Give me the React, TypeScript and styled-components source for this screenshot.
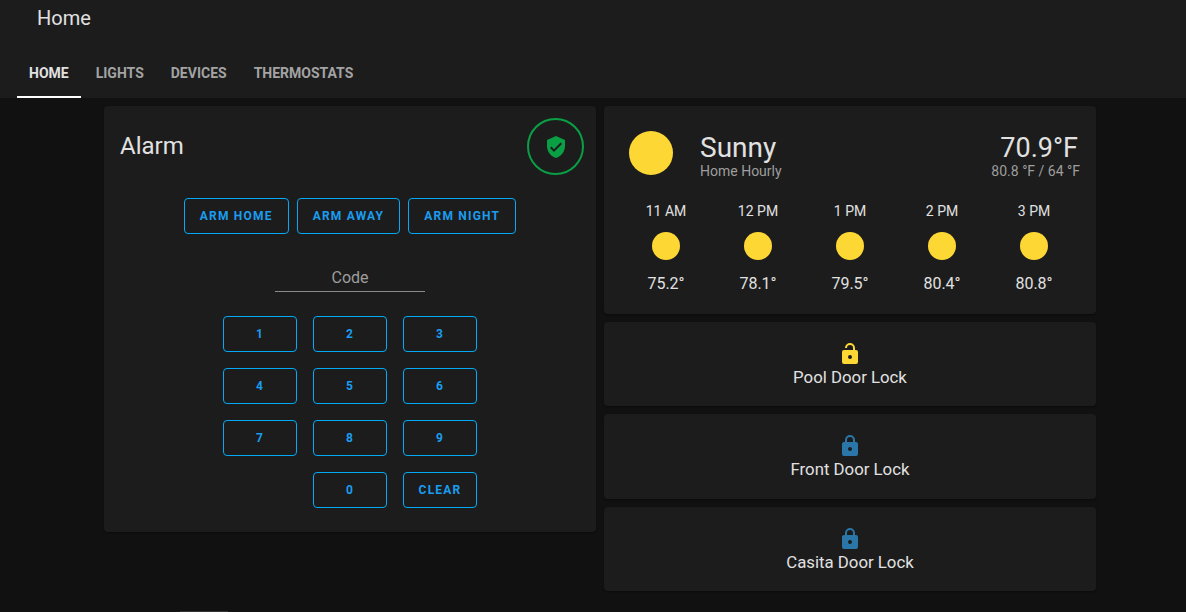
import React from 'react';
import styled, { createGlobalStyle } from 'styled-components';

const SHIELD =
  'M10,17L6,13L7.41,11.58L10,14.17L16.59,7.58L18,9M12,1L3,5V11C3,16.55 6.84,21.74 12,23C17.16,21.74 21,16.55 21,11V5L12,1Z';
const LOCK =
  'M12,17A2,2 0 0,0 14,15C14,13.89 13.1,13 12,13A2,2 0 0,0 10,15A2,2 0 0,0 12,17M18,8A2,2 0 0,1 20,10V20A2,2 0 0,1 18,22H6A2,2 0 0,1 4,20V10C4,8.89 4.9,8 6,8H7V6A5,5 0 0,1 12,1A5,5 0 0,1 17,6V8H18M12,3A3,3 0 0,0 9,6V8H15V6A3,3 0 0,0 12,3Z';
const LOCK_OPEN =
  'M18,8H17V6A5,5 0 0,0 12,1A5,5 0 0,0 7,6H9A3,3 0 0,1 12,3A3,3 0 0,1 15,6V8H6A2,2 0 0,0 4,10V20A2,2 0 0,0 6,22H18A2,2 0 0,0 20,20V10A2,2 0 0,0 18,8M12,17A2,2 0 0,1 10,15A2,2 0 0,1 12,13A2,2 0 0,1 14,15A2,2 0 0,1 12,17Z';

const tabs = ['Home', 'Lights', 'Devices', 'Thermostats'];
const armModes = ['Arm Home', 'Arm Away', 'Arm Night'];
const keys = ['1', '2', '3', '4', '5', '6', '7', '8', '9', '', '0', 'Clear'];
const hours = [
  { time: '11 AM', temp: '75.2°' },
  { time: '12 PM', temp: '78.1°' },
  { time: '1 PM', temp: '79.5°' },
  { time: '2 PM', temp: '80.4°' },
  { time: '3 PM', temp: '80.8°' },
];
const locks = [
  { name: 'Pool Door Lock', open: true },
  { name: 'Front Door Lock', open: false },
  { name: 'Casita Door Lock', open: false },
];

export default function App() {
  return (
    <>
      <GlobalStyle />
      <Header>
        <Title>Home</Title>
        <Tabs>
          {tabs.map((tab, i) => (
            <Tab key={tab} $active={i === 0}>
              {tab}
            </Tab>
          ))}
        </Tabs>
      </Header>
      <Content>
        <Column>
          <AlarmCard>
            <AlarmTop>
              <CardTitle>Alarm</CardTitle>
              <ShieldRing>
                <svg width="24" height="24" viewBox="0 0 24 24" fill="currentColor">
                  <path d={SHIELD} />
                </svg>
              </ShieldRing>
            </AlarmTop>
            <ArmRow>
              {armModes.map((mode) => (
                <ArmButton key={mode}>{mode}</ArmButton>
              ))}
            </ArmRow>
            <CodeField>Code</CodeField>
            <Keypad>
              {keys.map((key, i) =>
                key ? <KeyButton key={key}>{key}</KeyButton> : <span key={i} />,
              )}
            </Keypad>
          </AlarmCard>
          <NextCardEdge />
        </Column>
        <Column>
          <WeatherCard>
            <WeatherTop>
              <BigSun />
              <Condition>
                <ConditionName>Sunny</ConditionName>
                <Muted>Home Hourly</Muted>
              </Condition>
              <Temps>
                <BigTemp>70.9°F</BigTemp>
                <Muted>80.8 °F / 64 °F</Muted>
              </Temps>
            </WeatherTop>
            <Forecast>
              {hours.map((hour) => (
                <Hour key={hour.time}>
                  <HourTime>{hour.time}</HourTime>
                  <SmallSun />
                  <HourTemp>{hour.temp}</HourTemp>
                </Hour>
              ))}
            </Forecast>
          </WeatherCard>
          {locks.map((lock) => (
            <LockCard key={lock.name}>
              <LockIcon $open={lock.open}>
                <svg width="24" height="24" viewBox="0 0 24 24" fill="currentColor">
                  <path d={lock.open ? LOCK_OPEN : LOCK} />
                </svg>
              </LockIcon>
              <LockName>{lock.name}</LockName>
            </LockCard>
          ))}
        </Column>
      </Content>
    </>
  );
}

const GlobalStyle = createGlobalStyle`
  html, body {
    margin: 0;
    height: 612px;
    overflow: hidden;
    background: #111111;
    color: #e1e1e1;
    font-family: Roboto, "Liberation Sans", sans-serif;
  }
  * {
    box-sizing: border-box;
  }
`;

const Header = styled.header`
  height: 98px;
  background: #1c1c1c;
  padding-left: 17px;
`;

const Title = styled.div`
  height: 48px;
  padding: 6px 0 0 20px;
  font-size: 20px;
  line-height: 24px;
`;

const Tabs = styled.nav`
  display: flex;
  height: 50px;
`;

const Tab = styled.div<{ $active: boolean }>`
  display: flex;
  align-items: center;
  padding: 2px 12px 0;
  margin-right: 3px;
  font-size: 14px;
  font-weight: 700;
  text-transform: uppercase;
  color: ${(p) => (p.$active ? '#e1e1e1' : '#a3a3a3')};
  border-bottom: 2px solid ${(p) => (p.$active ? '#ffffff' : 'transparent')};
`;

const Content = styled.main`
  display: grid;
  grid-template-columns: 492px 492px;
  gap: 8px;
  justify-content: center;
  padding: 8px 0 0 14px;
`;

const Column = styled.div`
  display: flex;
  flex-direction: column;
  gap: 8px;
  align-items: stretch;
`;

const Card = styled.section`
  background: #1c1c1c;
  border-radius: 4px;
  box-shadow: 0 1px 2px rgba(0, 0, 0, 0.4);
`;

const AlarmCard = styled(Card)`
  height: 426px;
  padding: 12px 12px 0;
`;

const AlarmTop = styled.div`
  display: flex;
  justify-content: space-between;
  align-items: center;
  height: 57px;
  padding-left: 4px;
`;

const CardTitle = styled.h2`
  margin: 0;
  padding-bottom: 2px;
  font-size: 24px;
  font-weight: 400;
  line-height: 32px;
`;

const ShieldRing = styled.div`
  display: flex;
  align-items: center;
  justify-content: center;
  width: 57px;
  height: 57px;
  border: 2px solid #0a9f45;
  border-radius: 50%;
  color: #0a9f45;
`;

const ArmRow = styled.div`
  display: flex;
  justify-content: center;
  gap: 8px;
  margin-top: 23px;
`;

const OutlineButton = styled.button`
  height: 36px;
  padding: 0;
  background: transparent;
  border: 1px solid #03a9f4;
  border-radius: 4px;
  color: #1a9cf0;
  font-family: inherit;
  font-size: 12px;
  font-weight: 700;
  letter-spacing: 1.2px;
  text-transform: uppercase;
`;

const ArmButton = styled(OutlineButton)`
  padding: 0 15px;
`;

const CodeField = styled.div`
  width: 150px;
  height: 27px;
  margin: 31px auto 0;
  text-align: center;
  font-size: 16px;
  line-height: 26px;
  color: #9e9e9e;
  border-bottom: 1px solid #8a8a8a;
`;

const Keypad = styled.div`
  display: grid;
  grid-template-columns: repeat(3, 74px);
  grid-auto-rows: 36px;
  gap: 16px;
  justify-content: center;
  margin-top: 24px;
`;

const KeyButton = styled(OutlineButton)``;

const NextCardEdge = styled.div`
  width: 48px;
  height: 4px;
  margin: 71px 0 0 76px;
  background: #333333;
`;

const WeatherCard = styled(Card)`
  height: 208px;
  padding: 25px 16px 0 25px;
`;

const WeatherTop = styled.div`
  display: flex;
  align-items: center;
  height: 44px;
`;

const BigSun = styled.div`
  width: 44px;
  height: 44px;
  border-radius: 50%;
  background: #fdd835;
`;

const Condition = styled.div`
  flex: 1;
  margin: 3px 0 0 27px;
`;

const ConditionName = styled.div`
  font-size: 28px;
  line-height: 32px;
`;

const Muted = styled.div`
  font-size: 14px;
  line-height: 14px;
  color: #9e9e9e;
`;

const Temps = styled.div`
  margin-top: 3px;
  text-align: right;
`;

const BigTemp = styled.div`
  margin-right: 2px;
  font-size: 27px;
  line-height: 32px;
`;

const Forecast = styled.div`
  display: grid;
  grid-template-columns: repeat(5, 92px);
  justify-content: center;
  margin: 26px 9px 0 0;
`;

const Hour = styled.div`
  display: flex;
  flex-direction: column;
  align-items: center;
`;

const HourTime = styled.div`
  font-size: 14px;
  line-height: 20px;
`;

const SmallSun = styled.div`
  width: 28px;
  height: 28px;
  margin-top: 11px;
  border-radius: 50%;
  background: #fdd835;
`;

const HourTemp = styled.div`
  margin-top: 12px;
  font-size: 16px;
  line-height: 24px;
`;

const LockCard = styled(Card)`
  display: flex;
  flex-direction: column;
  align-items: center;
  height: 84.33px;
  padding-top: 20px;
`;

const LockIcon = styled.div<{ $open: boolean }>`
  height: 24px;
  color: ${(p) => (p.$open ? '#fdd835' : '#2a76a8')};
`;

const LockName = styled.div`
  font-size: 16.8px;
  font-weight: 400;
  line-height: 22px;
`;
